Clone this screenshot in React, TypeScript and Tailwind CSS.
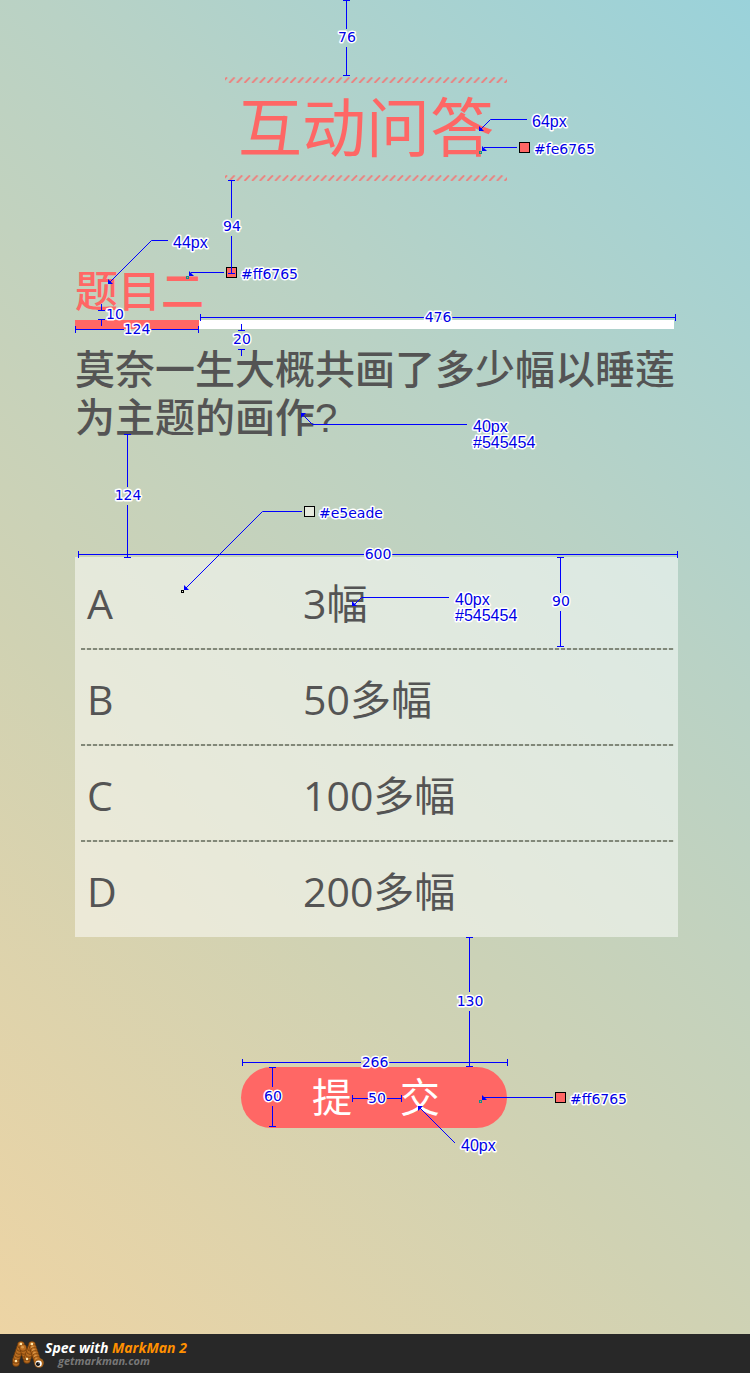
import React from "react";

type Dim = {
  axis: "h" | "v";
  at: number;
  from: number;
  to: number;
  label: string;
  gap: [number, number];
  textX: number;
  textY: number;
};

type Leader = {
  points: string;
  tip: [number, number];
  tipDir: "down" | "up";
  target?: [number, number];
  targetColor?: string;
};

const dims: Dim[] = [
  { axis: "v", at: 346, from: 0, to: 75, label: "76", gap: [29, 47], textX: 347, textY: 42 },
  { axis: "v", at: 231, from: 180, to: 273, label: "94", gap: [218, 236], textX: 232, textY: 231 },
  { axis: "h", at: 329, from: 75, to: 198, label: "124", gap: [124, 150], textX: 137, textY: 334 },
  { axis: "h", at: 317, from: 200, to: 675, label: "476", gap: [424, 451], textX: 438, textY: 322 },
  { axis: "v", at: 127, from: 434, to: 557, label: "124", gap: [487, 505], textX: 128, textY: 500 },
  { axis: "h", at: 554, from: 78, to: 677, label: "600", gap: [364, 391], textX: 378, textY: 559 },
  { axis: "v", at: 560, from: 557, to: 646, label: "90", gap: [593, 611], textX: 561, textY: 606 },
  { axis: "v", at: 469, from: 937, to: 1066, label: "130", gap: [992, 1011], textX: 470, textY: 1006 },
  { axis: "h", at: 1062, from: 242, to: 507, label: "266", gap: [361, 388], textX: 375, textY: 1067 },
  { axis: "v", at: 272, from: 1067, to: 1126, label: "60", gap: [1087, 1106], textX: 273, textY: 1101 },
  { axis: "h", at: 1098, from: 352, to: 401, label: "50", gap: [368, 386], textX: 377, textY: 1103 },
];

const leaders: Leader[] = [
  { points: "527,119.5 490.5,119.5 481,129", tip: [479, 126], tipDir: "down" },
  { points: "517,147.5 484,147.5", tip: [482, 146], tipDir: "down", target: [479, 151], targetColor: "#0d9488" },
  { points: "168,240.5 151.5,240.5 110,282", tip: [108, 279], tipDir: "down" },
  { points: "224,272.5 191,272.5", tip: [189, 271], tipDir: "down", target: [186, 276], targetColor: "#0d9488" },
  { points: "467,424.5 312.5,424.5 303,415", tip: [301, 413], tipDir: "up" },
  { points: "302,511.5 262.5,511.5 185,589", tip: [184, 585], tipDir: "down", target: [181, 590], targetColor: "#000000" },
  { points: "449,597.5 361.5,597.5 354,605", tip: [352, 601], tipDir: "down" },
  { points: "553,1097.5 484,1097.5", tip: [482, 1095], tipDir: "down", target: [479, 1100], targetColor: "#0d9488" },
  { points: "455,1143 420,1108", tip: [418, 1106], tipDir: "up" },
];

const swatches = [
  { x: 519, y: 142, fill: "#fe6765", label: "#fe6765" },
  { x: 226, y: 267, fill: "#ff6765", label: "#ff6765" },
  { x: 304, y: 506, fill: "#e5eade", label: "#e5eade" },
  { x: 555, y: 1092, fill: "#ff6765", label: "#ff6765" },
];

const notes = [
  { x: 532, y: 127, label: "64px" },
  { x: 173, y: 248, label: "44px" },
  { x: 473, y: 432, label: "40px" },
  { x: 473, y: 448, label: "#545454" },
  { x: 455, y: 605, label: "40px" },
  { x: 455, y: 621, label: "#545454" },
  { x: 461, y: 1151, label: "40px" },
];

const options = [
  { key: "A", text: "3幅" },
  { key: "B", text: "50多幅" },
  { key: "C", text: "100多幅" },
  { key: "D", text: "200多幅" },
];

function DimensionLine({ axis, at, from, to, gap }: Dim) {
  const c = at + 0.5;
  const a = from + 0.5;
  const b = to + 0.5;
  const d =
    axis === "v"
      ? `M${at - 3} ${a}h7M${at - 3} ${b}h7M${c} ${from}V${gap[0]}M${c} ${gap[1]}V${to}`
      : `M${a} ${at - 3}v7M${b} ${at - 3}v7M${from} ${c}H${gap[0]}M${gap[1]} ${c}H${to}`;
  return <path d={d} />;
}

const smallLabel =
  "fill-[#0000e6] stroke-white stroke-[3px] [paint-order:stroke] [stroke-linejoin:round] text-[14px] font-['DejaVu_Sans',sans-serif]";
const noteLabel =
  "fill-[#0000e6] stroke-white stroke-[3px] [paint-order:stroke] [stroke-linejoin:round] text-[16px] font-['Liberation_Sans',sans-serif]";

function Annotations() {
  return (
    <svg
      width="750"
      height="1334"
      viewBox="0 0 750 1334"
      className="pointer-events-none absolute left-0 top-0"
    >
      <g fill="none" stroke="#0000ff" strokeWidth="1">
        {dims.map((d, i) => (
          <DimensionLine key={i} {...d} />
        ))}
        <path d="M98 310.5h7M101.5 304V310M98 319.5h7M101.5 320V326" />
        <path d="M238 330.5h7M241.5 324V330M238 349.5h7M241.5 350V356" />
      </g>
      {swatches.map((s, i) => (
        <rect key={i} x={s.x + 0.5} y={s.y + 0.5} width="10" height="10" fill={s.fill} stroke="#000" />
      ))}
      <path d="M228 273.5h7M231.5 267V273" stroke="#0000ff" fill="none" />
      {leaders.map((l, i) => {
        const [x, y] = l.tip;
        return (
          <g key={i}>
            <polyline points={l.points} fill="none" stroke="#0000ff" />
            <polygon
              points={
                l.tipDir === "down"
                  ? `${x},${y} ${x},${y + 5} ${x + 5},${y + 5}`
                  : `${x},${y} ${x + 5},${y} ${x},${y + 5}`
              }
              fill="#0000ff"
            />
            {l.target && (
              <rect
                x={l.target[0] + 0.5}
                y={l.target[1] + 0.5}
                width="2"
                height="2"
                fill="none"
                stroke={l.targetColor}
              />
            )}
          </g>
        );
      })}
      {dims.map((d, i) => (
        <text key={i} x={d.textX} y={d.textY} textAnchor="middle" className={smallLabel}>
          {d.label}
        </text>
      ))}
      <text x="106" y="319" className={smallLabel}>10</text>
      <text x="242" y="344" textAnchor="middle" className={smallLabel}>20</text>
      {swatches.map((s, i) => (
        <text key={i} x={s.x + 15} y={s.y + 12} className={smallLabel}>
          {s.label}
        </text>
      ))}
      {notes.map((n, i) => (
        <text key={i} x={n.x} y={n.y} className={noteLabel}>
          {n.label}
        </text>
      ))}
    </svg>
  );
}

function Hatch({ id }: { id: string }) {
  return (
    <svg className="block h-[6px] w-[282px]" aria-hidden="true">
      <defs>
        <pattern id={id} width="7.65" height="6" patternUnits="userSpaceOnUse">
          <path d="M-3.4 6L2 0.4M4.25 6L9.65 0.4" stroke="#ff6765" strokeOpacity="0.75" strokeWidth="1.9" />
        </pattern>
      </defs>
      <rect width="100%" height="6" fill={`url(#${id})`} />
    </svg>
  );
}

const beads: [number, number][] = [
  [4, 24], [4, 21], [5, 18], [6, 15], [7, 12], [8, 9], [9, 6],
  [15, 21], [14, 18], [13, 15], [12, 12], [11, 9],
  [16, 18], [17, 15], [18, 12], [19, 9], [20, 6],
  [21, 9], [22, 12], [23, 15], [24, 18], [25, 21],
];

const joints: [number, number][] = [[9, 5], [15, 20], [20, 5], [4, 22]];

function WormLogo() {
  return (
    <svg width="33" height="30" viewBox="0 0 33 30" aria-hidden="true">
      {beads.map(([x, y], i) => (
        <g key={i}>
          <circle cx={x} cy={y} r="3.7" fill="#7d430c" />
          <circle cx={x} cy={y - 0.3} r="3" fill="#b96c20" />
          <circle cx={x - 0.5} cy={y - 0.8} r="1.4" fill="#da9646" />
        </g>
      ))}
      {joints.map(([x, y], i) => (
        <circle key={i} cx={x} cy={y} r="1.2" fill="#ffe9b0" />
      ))}
      <circle cx="27" cy="24" r="4.8" fill="#a9651c" />
      <circle cx="26.6" cy="24.6" r="3.2" fill="#fff" />
      <circle cx="26" cy="25" r="2.1" fill="#111" />
      <circle cx="27" cy="24" r="0.6" fill="#fff" />
    </svg>
  );
}

export default function App() {
  return (
    <div className="flex min-h-screen flex-col">
      <main className="flex-1 bg-[linear-gradient(45deg,#edd4a4_0%,#d0d2b3_34%,#b9d2c5_66%,#9ad2da_100%)] font-['Noto_Sans_CJK_SC',sans-serif]">
        <div className="relative mx-auto max-w-[750px] pb-[206px] pt-[77px]">
          <header className="flex flex-col items-center pr-[18px]">
            <Hatch id="hatch-top" />
            <h1 className="pb-3 text-[64px] leading-[80px] text-[#fe6765]">互动问答</h1>
            <Hatch id="hatch-bottom" />
          </header>

          <form className="mt-[83px] pl-[75px] pr-[72px]" onSubmit={(e) => e.preventDefault()}>
            <h2 className="text-[43px] font-medium leading-[48px] text-[#ff6765]">题目二</h2>
            <div className="mr-1 mt-2 flex h-[9px]">
              <div className="w-[124px] bg-[#ff6765]" />
              <div className="flex-1 bg-white" />
            </div>

            <fieldset>
              <legend className="pt-[14px] text-[40px] font-medium leading-[48px] text-[#545454]">
                莫奈一生大概共画了多少幅以睡莲为主题的画作<span className="font-['Liberation_Sans',sans-serif]">?</span>
              </legend>
              <div className="mt-[115px] bg-white/50 pb-px font-['Open_Sans','Noto_Sans_CJK_SC',sans-serif] text-[41px] leading-[58px] text-[#545454]">
                {options.map((o, i) => (
                  <div key={o.key}>
                    {i > 0 && (
                      <div className="ml-[6px] mr-1 h-[2px] bg-[repeating-linear-gradient(90deg,#697060cc_0_4px,#69706022_4px_6px)]" />
                    )}
                    <label className="relative grid h-[94px] grid-cols-[216px_1fr] items-end pb-4 pl-3 first:h-[91px]">
                      <input type="radio" name="answer" value={o.key} className="sr-only" />
                      <span>{o.key}</span>
                      <span>{o.text}</span>
                    </label>
                  </div>
                ))}
              </div>
            </fieldset>

            <button
              type="submit"
              className="ml-[166px] mt-[130px] flex h-[61px] w-[266px] items-center justify-center gap-12 rounded-full bg-[#ff6765] pb-[6px] pl-1 text-[40px] leading-[54px] text-white"
            >
              <span>提</span>
              <span>交</span>
            </button>
          </form>

          <Annotations />
        </div>
      </main>

      <footer className="flex h-[39px] items-center bg-[#282828] pl-3 font-['Open_Sans',sans-serif] font-bold italic">
        <WormLogo />
        <div>
          <p className="text-[14px] leading-[14px] text-white">
            Spec with <span className="text-[#ff9000]">MarkMan 2</span>
          </p>
          <p className="pl-[13px] text-[11px] leading-[12px] text-[#777777]">getmarkman.com</p>
        </div>
      </footer>
    </div>
  );
}
